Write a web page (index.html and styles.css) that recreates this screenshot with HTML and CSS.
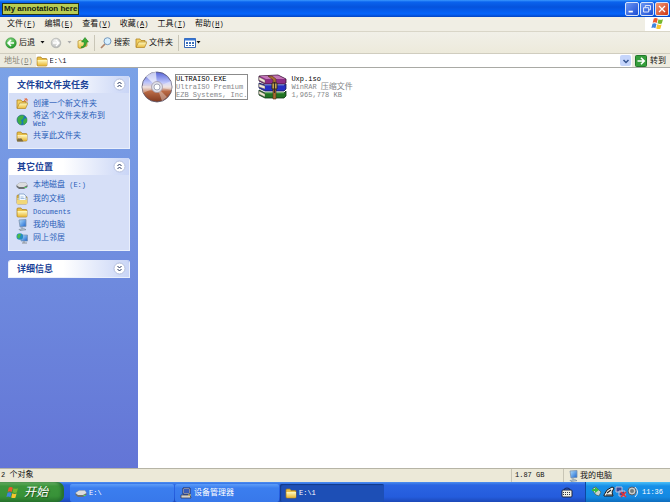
FILE: index.html
```html
<!DOCTYPE html>
<html lang="zh-CN">
<head>
<meta charset="utf-8">
<title>E:\1</title>
<link rel="stylesheet" href="styles.css">
</head>
<body>
<svg class="defs" aria-hidden="true">
  <defs>
    <linearGradient id="gFolder" x1="0" y1="0" x2="0" y2="1"><stop offset="0" stop-color="#fffbc0"/><stop offset="1" stop-color="#e9b93a"/></linearGradient>
    <radialGradient id="gGreen" cx=".4" cy=".3" r=".8"><stop offset="0" stop-color="#8fe08a"/><stop offset="1" stop-color="#138a1c"/></radialGradient>
    <radialGradient id="gGray" cx=".4" cy=".3" r=".8"><stop offset="0" stop-color="#f4f4f2"/><stop offset="1" stop-color="#aeb0b0"/></radialGradient>
    <linearGradient id="gScreen" x1="0" y1="0" x2="1" y2="1"><stop offset="0" stop-color="#b5e2ff"/><stop offset="1" stop-color="#1763cf"/></linearGradient>
    <linearGradient id="gDisc" x1="0" y1="0" x2="0" y2="1"><stop offset="0" stop-color="#5563d8"/><stop offset=".35" stop-color="#bcc4fa"/><stop offset=".5" stop-color="#e8d5d2"/><stop offset=".65" stop-color="#b96a45"/><stop offset="1" stop-color="#80391f"/></linearGradient>
  </defs>
  <symbol id="folder" viewBox="0 0 12 12"><path d="M1 3q0-1 1-1h3l1 1.500h4q1 0 1 1V10q0 1-1 1H2q-1 0-1-1z" fill="#e8bf48" stroke="#a77b1d" stroke-width=".7"/><path d="M1.500 5H11v5.500H2z" fill="url(#gFolder)"/></symbol>
  <symbol id="open" viewBox="0 0 12 12"><path d="M1 10V2h4l1 1.500h4V6" fill="#f4d263" stroke="#b08422" stroke-width=".8"/><path d="M1 10.500L3.500 5H12l-2.500 5.500z" fill="url(#gFolder)" stroke="#b08422" stroke-width=".7"/></symbol>
  <symbol id="newfolder" viewBox="0 0 12 12"><use href="#open"/><path d="M7.500 3.500l3-2.500M8.500 1H11v2.500" fill="none" stroke="#e9602b" stroke-width="1"/></symbol>
  <symbol id="share" viewBox="0 0 12 12"><use href="#folder"/><path d="M1 11q0-3 2.500-3t3 2l1 1.500H1z" fill="#7b6c42"/><circle cx="3.500" cy="7" r="1.500" fill="#f7d9a0"/></symbol>
  <symbol id="globe" viewBox="0 0 12 12"><circle cx="6" cy="6" r="5" fill="#1976b8" stroke="#285d7a" stroke-width=".6"/><path d="M2 3q4-3 6-1L7 5 5 6l1 3-2 2Q0 7 2 3M8 5l3-1v4L8 11 7 8z" fill="#3fae45"/></symbol>
  <symbol id="disk" viewBox="0 0 12 12"><path d="M.5 6L4 3.500h6L11.500 6v2L8 10H3L.5 8z" fill="#6c7072"/><path d="M.5 6L4 3.500h6L11.500 6 8 8H3z" fill="#dcddde"/><path d="M8.500 8.500h2" stroke="#4fdd60"/></symbol>
  <symbol id="docs" viewBox="0 0 12 12"><use href="#folder"/><path d="M3 1h5l2 2v6H3z" fill="#f4faff" stroke="#6d90bd" stroke-width=".7"/><path d="M4.500 4h3M4.500 5.500h4" stroke="#7ca1d2" stroke-width=".7"/><path d="M1 7h10v4H1z" fill="#f1d777"/></symbol>
  <symbol id="pc" viewBox="0 0 12 12"><path d="M3 1l7-.5V7.500L4 8z" fill="url(#gScreen)" stroke="#7b92ad" stroke-width=".8"/><path d="M6 8v2M3 10.500l5-.8 2 1-6 .8z" stroke="#77899a" fill="#d4dce2" stroke-width=".7"/></symbol>
  <symbol id="network" viewBox="0 0 12 12"><path d="M5 3h6.500v6H5z" fill="url(#gScreen)" stroke="#7690ad" stroke-width=".7"/><path d="M6 11h5M8 9v2" stroke="#8c9298"/><circle cx="3.800" cy="4.500" r="3.300" fill="#258dc0"/><path d="M2 2l3 0-1 3-1 2-2-2z" fill="#4aba48"/></symbol>
  <symbol id="flag" viewBox="0 0 14 13"><path d="M2.800 1.500q2-1 4 .3L5.700 6q-2-1.200-4-.2z" fill="#ef5a2a"/><path d="M7.500 2.200q2 1.200 4.500.1l-1.200 4.300q-2 .9-4.300-.3z" fill="#77b82e"/><path d="M1.500 6.700q2-1 4 .2l-1.100 4.300q-2-1.200-4-.2z" fill="#3f84dc"/><path d="M6.300 7.200q2.200 1.200 4.300.3l-1.200 4.200q-2 .9-4.200-.3z" fill="#f7c52e"/></symbol>
  <symbol id="back" viewBox="0 0 12 12"><circle cx="6" cy="6" r="5.300" fill="url(#gGreen)" stroke="#288a2c" stroke-width=".5"/><path d="M9 6H3.500M6 3L3 6l3 3" fill="none" stroke="#fff" stroke-width="1.500"/></symbol>
  <symbol id="forward" viewBox="0 0 12 12"><circle cx="6" cy="6" r="4.800" fill="url(#gGray)" stroke="#a5a7a4" stroke-width=".6"/><path d="M3 6h5.500M6 3l3 3-3 3" fill="none" stroke="#fff" stroke-width="1.400"/></symbol>
  <symbol id="up" viewBox="0 0 12 12"><path d="M1 4l3-1 1 1 5-1v6l-7 2.500-2-1z" fill="url(#gFolder)" stroke="#b18a27" stroke-width=".7"/><path d="M4 10q4-1 3-5H4.500L8 .5 11.500 5H9.500q0 5-5 6z" fill="#39ad36" stroke="#187618" stroke-width=".5"/></symbol>
  <symbol id="search" viewBox="0 0 12 12"><path d="M5 7l-4 4" stroke="#ad8269" stroke-width="1.700"/><circle cx="7.500" cy="4.200" r="3.500" fill="#d6efff" stroke="#7799bd" stroke-width="1"/></symbol>
  <symbol id="views" viewBox="0 0 12 12"><path d="M.5 1.500h11v9H.5z" fill="#fff" stroke="#3868b5"/><path d="M.5 2.500h11" stroke="#3575d3" stroke-width="2"/><path d="M2 5h2v2H2zm3 0h2v2H5zm3 0h2v2H8zM2 8h2v1H2zm3 0h2v1H5zm3 0h2v1H8z" fill="#386fbb"/></symbol>
  <symbol id="go" viewBox="0 0 12 12"><rect x=".5" y=".5" width="11" height="11" rx="1" fill="#359e3b" stroke="#21782a"/><path d="M2.500 6H9M6 2.800L9.200 6 6 9.200" fill="none" stroke="#fff" stroke-width="1.600"/></symbol>
  <symbol id="caret" viewBox="0 0 5 5"><path d="M.5 1h4L2.500 3.500z" fill="currentColor"/></symbol>
  <symbol id="chevrons" viewBox="0 0 13 13"><circle cx="6.500" cy="6.500" r="5.500" fill="#fff" stroke="#b3bedd"/><path d="M4.500 6l2-2 2 2M4.500 9l2-2 2 2" fill="none" stroke="#26355f" stroke-width="1"/></symbol>
  <symbol id="disc" viewBox="0 0 32 32"><circle cx="16" cy="16" r="15" fill="url(#gDisc)" stroke="#55536b" stroke-width=".8"/><path d="M16 16L5 5.500Q10 1 15 1z" fill="#fff" opacity=".65"/><path d="M16 16l14-6q1 5 1 9z" fill="#fff" opacity=".35"/><path d="M16 16L2 22l-1-7zM16 16l5 14 5-4z" fill="#fff" opacity=".35"/><circle cx="16" cy="16" r="5.500" fill="#dedfe8" stroke="#9b91a0" stroke-width=".7"/><circle cx="16" cy="16" r="3" fill="#fff" stroke="#8589a0" stroke-width=".7"/></symbol>
  <symbol id="rar" viewBox="0 0 29 26"><path d="M1 2l19-1 8 4v4l-2 1H7L1 7z" fill="#8d2e86" stroke="#351331" stroke-width=".8"/><path d="M2 2l18-.5L27 5H8z" fill="#c377b6"/><path d="M1 9l6 2h19l2-1v5l-2 2H7l-6-3z" fill="#2630c4" stroke="#14164f" stroke-width=".8"/><path d="M7 11h19" stroke="#6d86ef"/><path d="M1 16l6 3h19l2-2v5l-2 2H7l-6-3z" fill="#217424" stroke="#0d3411" stroke-width=".8"/><path d="M7 19h19" stroke="#59b451"/><path d="M1 3l6 3v3L1 6zM1 10l6 2v3l-6-2zM1 17l6 3v3l-6-3z" fill="#f1ead3" stroke="#50464c" stroke-width=".4"/><path d="M14 2l4 3v20h-3V6l-5-4z" fill="#a76c32" stroke="#51311a" stroke-width=".6"/><path d="M14 9h5v6h-5z" fill="#d6b25a" stroke="#352b20"/><path d="M16.500 8v11" stroke="#332d2b" stroke-width="1.200"/></symbol>
  <symbol id="device" viewBox="0 0 12 12"><path d="M3 1h7v6H3z" fill="#e5e5e0" stroke="#222d60"/><path d="M4 2h5v4H4z" fill="#385bb7"/><path d="M1 8h9l1 3H1z" fill="#d4d2ca" stroke="#303248" stroke-width=".7"/><path d="M8 8h3" stroke="#e6c445"/></symbol>
  <symbol id="keyboard" viewBox="0 0 12 12"><path d="M3 4q0-2 3-2t3 2" fill="none" stroke="#17265e"/><rect x="1" y="4" width="10" height="7" rx="1" fill="#f3f1e6" stroke="#1e2540"/><path d="M2 6.500h8M2 8.500h8" stroke="#343643" stroke-width="1" stroke-dasharray="1 1"/></symbol>
  <symbol id="usb" viewBox="0 0 12 12"><path d="M2 2l3-1 5 5-2 4-3-1-3-4z" fill="#c9d3d1" stroke="#365b5b" stroke-width=".7"/><path d="M1 3h3V1l4 3-4 3V5H1z" fill="#35bd42"/></symbol>
  <symbol id="safe" viewBox="0 0 12 12"><path d="M1 9l3-5 5-3 2 1-2 4 1 4H1z" fill="#f1f1e9" stroke="#171b22"/><path d="M4 7l4-3M3 9h6" stroke="#222" stroke-width="1.200"/></symbol>
  <symbol id="netoff" viewBox="0 0 12 12"><path d="M1 1h6v5H1zM4 5h6v5H4z" fill="#3b4c9c" stroke="#b9c3df"/><path d="M6 6l5 5m0-5l-5 5" stroke="#e83232" stroke-width="1.500"/></symbol>
  <symbol id="sound" viewBox="0 0 12 12"><circle cx="5" cy="5" r="4" fill="#c9cdcc" stroke="#565d68"/><circle cx="5" cy="5" r="2" fill="#727a7c"/><path d="M8 1q5 5 0 10" fill="none" stroke="#e9eef5"/></symbol>
</svg>

<div class="window">
  <header class="title"><span class="note">My annotation here</span>
    <div class="controls">
      <button aria-label="最小化"><svg viewBox="0 0 14 14"><path d="M3 10h5" stroke="#fff" stroke-width="2"/></svg></button>
      <button aria-label="还原"><svg viewBox="0 0 14 14"><path d="M5 5V3h6v5H9M3 5.500h6v5H3z" fill="none" stroke="#fff"/></svg></button>
      <button class="close" aria-label="关闭"><svg viewBox="0 0 14 14"><path d="M3.500 3.500l7 7m0-7l-7 7" stroke="#fff" stroke-width="1.500"/></svg></button>
    </div>
  </header>
  <nav class="menu">
    <button>文件<span class="en">(<u>F</u>)</span></button><button>编辑<span class="en">(<u>E</u>)</span></button><button>查看<span class="en">(<u>V</u>)</span></button><button>收藏<span class="en">(<u>A</u>)</span></button><button>工具<span class="en">(<u>T</u>)</span></button><button>帮助<span class="en">(<u>H</u>)</span></button>
    <span class="brand"><svg class="i14"><use href="#flag"/></svg></span>
  </nav>
  <div class="toolbar">
    <button><svg class="i12"><use href="#back"/></svg>后退</button>
    <button aria-label="后退历史"><svg class="caret"><use href="#caret"/></svg></button>
    <button aria-label="前进" class="dim"><svg class="i12"><use href="#forward"/></svg></button>
    <button aria-label="前进历史" class="dim"><svg class="caret"><use href="#caret"/></svg></button>
    <button aria-label="向上"><svg class="i12"><use href="#up"/></svg></button>
    <i class="rule"></i>
    <button><svg class="i12"><use href="#search"/></svg>搜索</button>
    <button><svg class="i12"><use href="#open"/></svg>文件夹</button>
    <i class="rule"></i>
    <button aria-label="查看方式" class="views"><svg class="i12"><use href="#views"/></svg><svg class="caret"><use href="#caret"/></svg></button>
  </div>
  <form class="address">
    <label for="path">地址<span class="en">(<u>D</u>)</span></label>
    <div class="field"><svg class="i12"><use href="#folder"/></svg><input id="path" class="en" value="E:\1"><button type="button" class="drop" aria-label="展开地址"><svg viewBox="0 0 8 8"><path d="M1.500 3L4 5.500 6.500 3" fill="none" stroke="#34538f" stroke-width="1.500"/></svg></button></div>
    <button type="button" class="go"><svg class="i12"><use href="#go"/></svg>转到</button>
  </form>

  <div class="body">
    <aside>
      <section>
        <h2>文件和文件夹任务<button aria-label="折叠"><svg><use href="#chevrons"/></svg></button></h2>
        <ul>
          <li><a href="#"><svg class="i12"><use href="#newfolder"/></svg><span>创建一个新文件夹</span></a></li>
          <li class="two"><a href="#"><svg class="i12"><use href="#globe"/></svg><span>将这个文件夹发布到<br><span class="en">Web</span></span></a></li>
          <li><a href="#"><svg class="i12"><use href="#share"/></svg><span>共享此文件夹</span></a></li>
        </ul>
      </section>
      <section>
        <h2>其它位置<button aria-label="折叠"><svg><use href="#chevrons"/></svg></button></h2>
        <ul>
          <li><a href="#"><svg class="i12"><use href="#disk"/></svg><span>本地磁盘<span class="en"> (E:)</span></span></a></li>
          <li><a href="#"><svg class="i12"><use href="#docs"/></svg><span>我的文档</span></a></li>
          <li><a href="#"><svg class="i12"><use href="#folder"/></svg><span class="en">Documents</span></a></li>
          <li><a href="#"><svg class="i12"><use href="#pc"/></svg><span>我的电脑</span></a></li>
          <li><a href="#"><svg class="i12"><use href="#network"/></svg><span>网上邻居</span></a></li>
        </ul>
      </section>
      <section>
        <h2>详细信息<button class="down" aria-label="展开"><svg><use href="#chevrons"/></svg></button></h2>
      </section>
    </aside>
    <main>
      <article class="file"><svg class="disc"><use href="#disc"/></svg><div class="info en focus"><b>ULTRAISO.EXE</b><span>UltraISO Premium</span><span>EZB Systems, Inc.</span></div></article>
      <article class="file"><svg class="rar"><use href="#rar"/></svg><div class="info en"><b>Uxp.iso</b><span>WinRAR <span class="zh">压缩文件</span></span><span>1,965,778 KB</span></div></article>
    </main>
  </div>

  <footer class="status"><span class="count"><span class="en">2 </span>个对象</span><span class="size en">1.87 GB</span><span class="where"><svg class="i12"><use href="#pc"/></svg>我的电脑</span></footer>
  <div class="taskbar">
    <button class="start"><svg><use href="#flag"/></svg>开始</button>
    <div class="tasks">
      <button class="en"><svg class="i12"><use href="#disk"/></svg>E:\</button>
      <button><svg class="i12"><use href="#device"/></svg>设备管理器</button>
      <button class="en active"><svg class="i12"><use href="#folder"/></svg>E:\1</button>
    </div>
    <svg class="i12 lang"><use href="#keyboard"/></svg>
    <div class="tray"><svg class="i12"><use href="#usb"/></svg><svg class="i12"><use href="#safe"/></svg><svg class="i12"><use href="#netoff"/></svg><svg class="i12"><use href="#sound"/></svg><time class="en">11:36</time></div>
  </div>
</div>
</body>
</html>
```
FILE: styles.css
```css
* { box-sizing: border-box; }
body { margin: 0; font: 8px/12px "Liberation Sans", "Noto Sans CJK SC", sans-serif; color: #111; }
button, input { font: inherit; color: inherit; border: 0; padding: 0; margin: 0; background: none; }
button { display: flex; align-items: center; white-space: nowrap; }
svg { display: block; flex: none; }
.defs { position: absolute; width: 0; height: 0; }
.en { font-family: "Liberation Mono", "Noto Sans CJK SC", monospace; font-size: 7px; white-space: pre; }
.zh { font-size: 8px; }
.i12 { width: 12px; height: 12px; }
.i14 { width: 14px; height: 13px; }
.disc { width: 32px; height: 32px; }
.rar { width: 29px; height: 26px; }
.caret { width: 5px; height: 5px; }

.window { height: 100vh; display: flex; flex-direction: column; background: #fff; }
.title { height: 17px; flex: none; display: flex; align-items: center; justify-content: space-between; padding: 0 1px 0 2px; background: linear-gradient(#3b98fd 0, #0a63ee 2px, #0553dd 7px, #0564fb 14px, #0344c2 17px); }
.note { font: bold 8px/10px "Liberation Sans", sans-serif; color: #14200c; background: #b9cc52; border: 1px solid #26331c; padding: 0 1px; }
.controls { display: flex; gap: 1px; }
.controls button { width: 14px; height: 14px; border: 1px solid #d7e4fa; border-radius: 2px; background: linear-gradient(135deg, #6b96f3, #1c4ed4); }
.controls .close { background: linear-gradient(135deg, #f09a78, #cf3514); }
.controls svg { width: 12px; height: 12px; }

.menu { height: 15px; flex: none; display: flex; align-items: stretch; gap: 9px; padding-left: 7px; background: #f0eee4; border-bottom: 1px solid #d9d6c8; }
.brand { margin-left: auto; width: 25px; display: flex; justify-content: center; background: #fff; }
.toolbar { height: 22px; flex: none; display: flex; align-items: center; gap: 5px; padding-left: 5px; background: linear-gradient(#f1f0e8, #edeadb); border-bottom: 1px solid #d0cdbf; }
.toolbar button { gap: 2px; }
.toolbar .views { gap: 0; }
.rule { width: 1px; height: 16px; background: #c9c6b7; }
.dim { color: #aaa; }
.address { height: 14px; flex: none; display: flex; align-items: center; gap: 3px; padding: 0 4px; background: #edebdf; border-bottom: 1px solid #a9aaa5; }
.address label { color: #858377; }
.field { flex: 1; height: 13px; display: flex; align-items: center; gap: 2px; background: #fff; }
.field input { flex: 1; min-width: 0; outline: 0; }
.drop { width: 11px; height: 11px; margin-right: 1px; justify-content: center; border-radius: 2px; background: #c5d5fb; }
.drop svg { width: 8px; height: 8px; }
.go { gap: 3px; }

.body { flex: 1; min-height: 0; display: flex; }
aside { width: 138px; flex: none; padding: 8px 8px 0; display: flex; flex-direction: column; gap: 9px; background: linear-gradient(#7ba2e7, #6375d6); }
section { background: #d6dff7; border: 1px solid #e9effc; border-top: 0; border-radius: 3px 3px 0 0; overflow: hidden; }
h2 { height: 17px; margin: 0; padding: 0 3px 0 8px; display: flex; align-items: center; justify-content: space-between; font-size: 9px; color: #1b4297; background: linear-gradient(90deg, #fff, #fff 45%, #c9d5f6); }
h2 svg { width: 13px; height: 13px; }
.down { transform: rotate(180deg); }
ul { list-style: none; margin: 0; padding: 4px 7px 5px; }
li { height: 13px; }
li:first-child { height: 14px; }
.two { height: 18px; }
li a { display: flex; align-items: center; gap: 5px; color: #2a60b8; text-decoration: none; }
.two a { line-height: 8px; }
section:first-child ul { padding: 5px 7px 5px; }
main { flex: 1; display: flex; align-items: flex-start; gap: 12px; padding: 3px; overflow: hidden; }
.file { min-height: 32px; display: flex; align-items: center; gap: 3px; }
.info { display: flex; flex-direction: column; line-height: 8px; color: #85878a; border: 1px solid transparent; }
.info b { font-weight: 400; color: #000; }
.focus { border-color: #8b8b8b; margin-right: -2px; }
.file .focus { margin-left: -1px; }

.status { height: 14px; flex: none; display: flex; align-items: stretch; background: #ece9d8; border-top: 1px solid #b6b4a6; }
.status > span { padding-left: 3px; border-left: 1px solid #c8c5b5; }
.status .count { flex: 1; border: 0; padding-left: 1px; }
.status .size { width: 52px; }
.status .where { width: 107px; display: flex; align-items: center; gap: 1px; }
.taskbar { height: 20px; flex: none; display: flex; align-items: stretch; color: #fff; background: linear-gradient(#4c8ff0 0, #2a64e2 3px, #245cdc 15px, #1c48b8); }
.start { width: 64px; gap: 4px; padding-left: 6px; font-size: 12px; font-style: italic; text-shadow: 1px 1px 1px #234f20; border-radius: 0 7px 7px 0; background: linear-gradient(#70b56c 0, #3c963b 4px, #389238 14px, #28742c); box-shadow: inset -3px 0 3px #27702f; }
.start svg { width: 14px; height: 13px; }
.tasks { flex: 1; min-width: 0; display: flex; gap: 1px; padding: 2px 0 0 6px; }
.tasks button { flex: 0 1 104px; gap: 2px; padding-left: 5px; border-radius: 2px; background: linear-gradient(#5c9cf8, #3b7eef 4px, #3878ea); }
.tasks .active { background: #1d4fb6; box-shadow: inset 1px 1px 1px #123a88; }
.lang { align-self: center; margin-right: 12px; }
.tray { width: 85px; display: flex; align-items: center; padding-left: 5px; border-left: 1px solid #0d48a0; background: linear-gradient(#4cc0f8 0, #1790e8 4px, #1489e2 15px, #0e6cbc); }
.tray time { margin-left: 3px; }
```
